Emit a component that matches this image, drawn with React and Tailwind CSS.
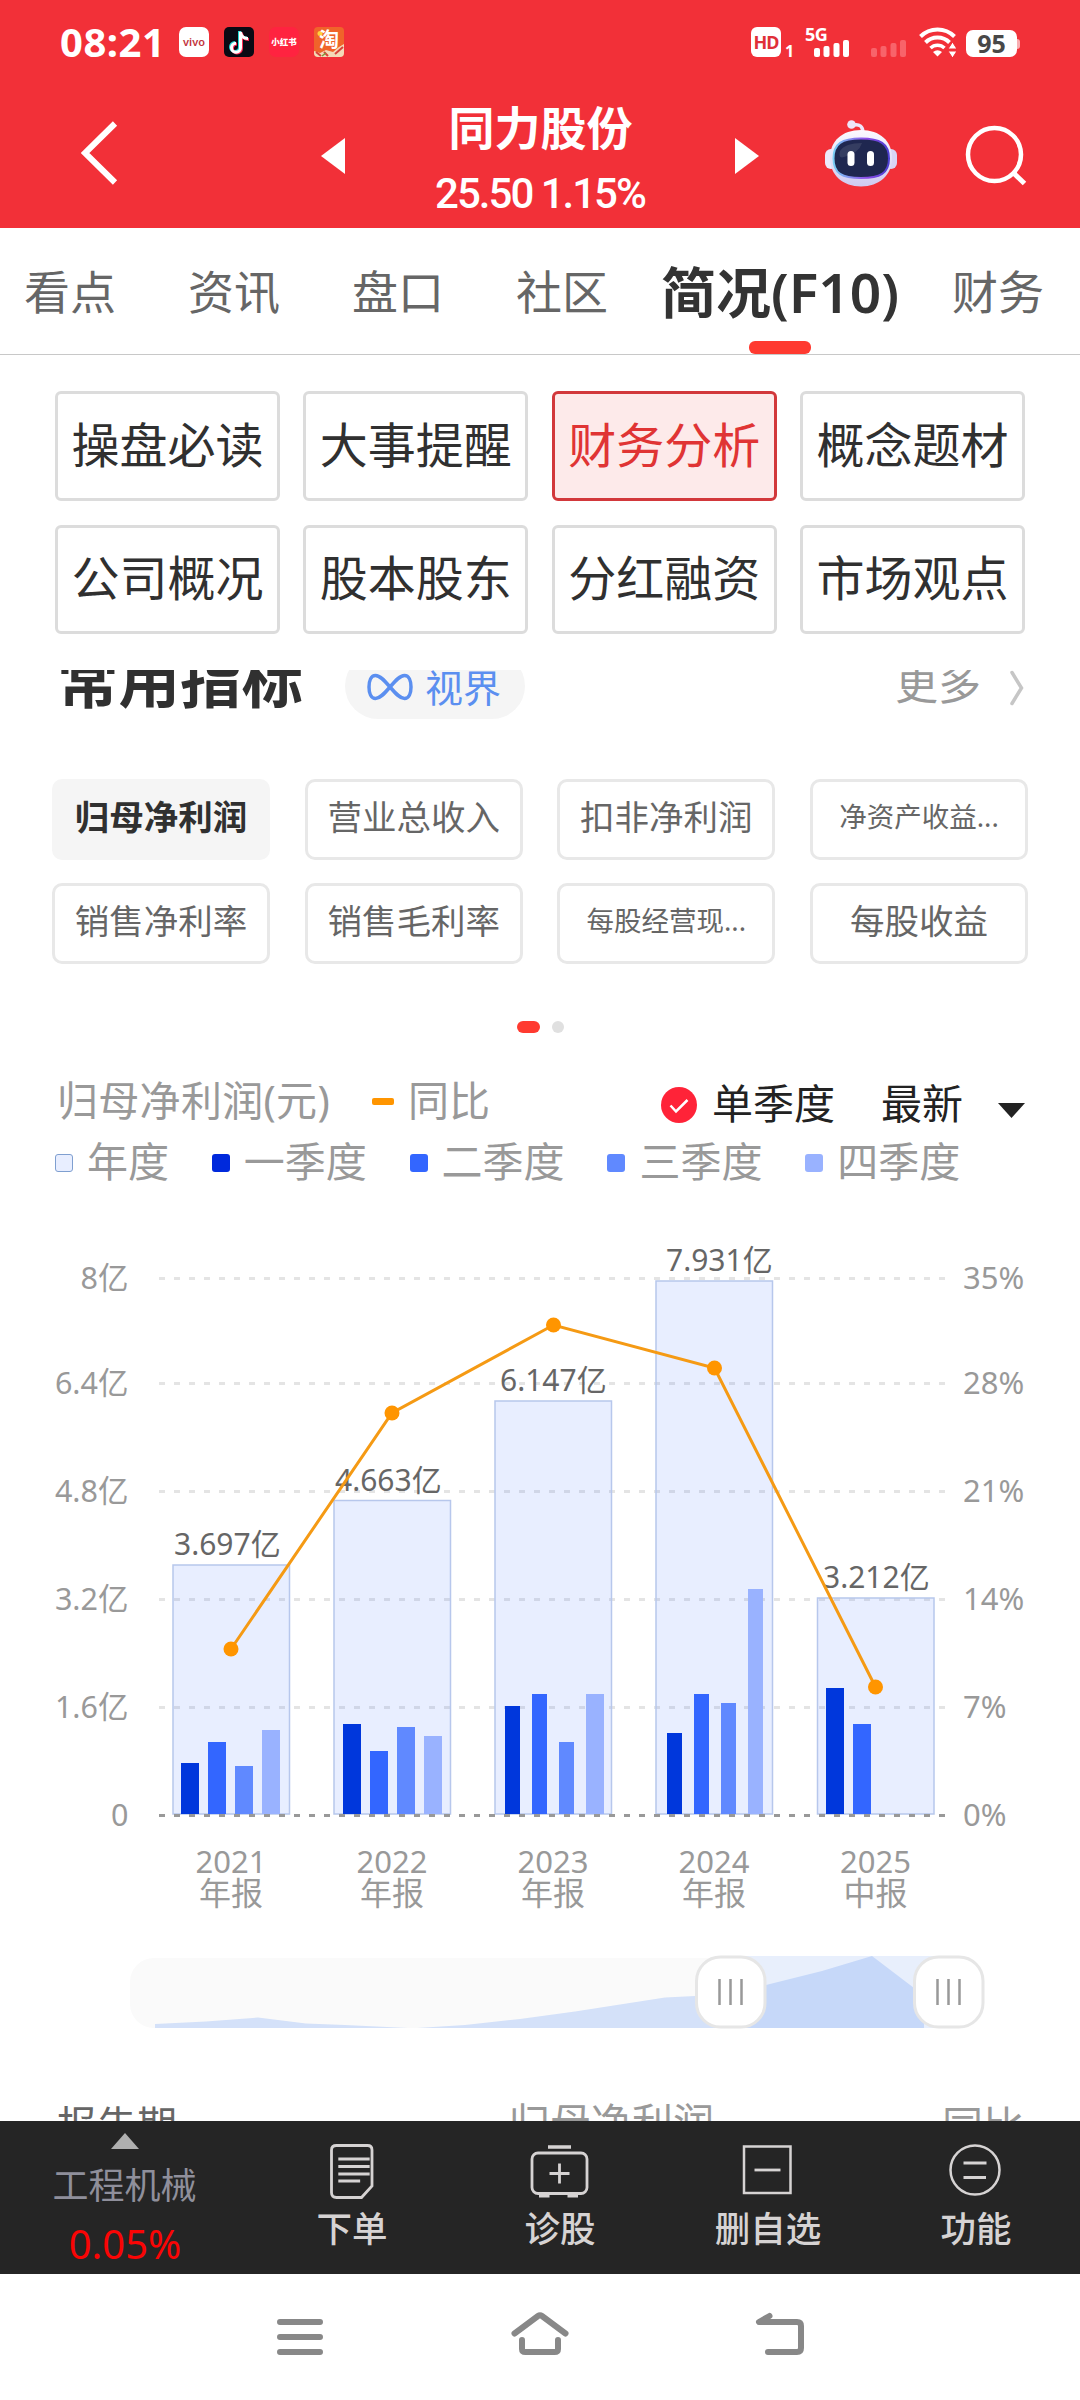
// App.jsx
const TABS = ["看点", "资讯", "盘口", "社区", "简况(F10)", "财务"];

const SECTIONS = [
  "操盘必读", "大事提醒", "财务分析", "概念题材",
  "公司概况", "股本股东", "分红融资", "市场观点",
];

const METRICS = [
  { name: "归母净利润", active: true },
  { name: "营业总收入" },
  { name: "扣非净利润" },
  { name: "净资产收益...", small: true },
  { name: "销售净利率" },
  { name: "销售毛利率" },
  { name: "每股经营现...", small: true },
  { name: "每股收益" },
];

const LEGEND = [
  { name: "年度", swatch: "bg-[#e8eeff] border border-[#7f9fd0]" },
  { name: "一季度", swatch: "bg-[#0029dc]" },
  { name: "二季度", swatch: "bg-[#3366ff]" },
  { name: "三季度", swatch: "bg-[#6089ff]" },
  { name: "四季度", swatch: "bg-[#99b2ff]" },
];

const Q_COLORS = ["#0037dc", "#3366ff", "#6089ff", "#99b2ff"];

// chart pixel space, q = [x, width, top] per quarter
const BASE_Y = 614;
const YEARS = [
  { year: "2021", kind: "年报", label: "3.697亿", lx: 174, x: 173, top: 365, q: [[181, 18, 563], [208, 18, 542], [235, 18, 566], [262, 18, 530]] },
  { year: "2022", kind: "年报", label: "4.663亿", lx: 335, x: 334, top: 300.5, q: [[343, 18, 524], [370, 18, 551], [397, 18, 527], [424, 18, 536]] },
  { year: "2023", kind: "年报", label: "6.147亿", lx: 500, x: 495, top: 201, q: [[505, 15, 506], [532, 15, 494], [559, 15, 542], [586, 18, 494]] },
  { year: "2024", kind: "年报", label: "7.931亿", lx: 666, x: 656, top: 81, q: [[667, 15, 533], [694, 15, 494], [721, 15, 503], [748, 15, 389]] },
  { year: "2025", kind: "中报", label: "3.212亿", lx: 823, x: 817.5, top: 398, q: [[826, 18, 488], [853, 18, 524]] },
];
const GROWTH = [[231, 449], [392, 213], [553.5, 125], [714.5, 168], [875.5, 487]];
const GRID = [
  { y: 78.5, left: "8亿", right: "35%" },
  { y: 183.5, left: "6.4亿", right: "28%" },
  { y: 291.5, left: "4.8亿", right: "21%" },
  { y: 399.5, left: "3.2亿", right: "14%" },
  { y: 507.5, left: "1.6亿", right: "7%" },
  { y: 615.5, left: "0", right: "0%" },
];

function Signal({ className }) {
  return (
    <svg width="35" height="17" viewBox="0 0 35 17" className={className} fill="currentColor">
      <rect x="0" y="8" width="6" height="9" rx="2" />
      <rect x="9.5" y="6" width="6" height="11" rx="2" />
      <rect x="19.5" y="3" width="6" height="14" rx="2" />
      <rect x="29" y="0" width="6" height="17" rx="2" />
    </svg>
  );
}

function StatusBar() {
  return (
    <div className="h-[84px] flex items-center pl-[60px] pr-[60px] text-white">
      <div className="w-[119px] text-[40px] leading-none font-bold tracking-[0.5px]">08:21</div>
      <div className="flex gap-[15px]">
        <div className="w-[30px] h-[30px] rounded-[7px] bg-white flex items-center justify-center">
          <span className="text-[11px] leading-none font-semibold text-[#c2343c] pb-[2px]">vivo</span>
        </div>
        <div className="w-[30px] h-[30px] rounded-[5px] bg-[#0a0a14]">
          <svg width="30" height="30" viewBox="0 0 30 30" fill="none" strokeWidth="3">
            <path d="M15.5 4v16a4.5 4.5 0 1 1-4.5-4.5M15.5 5c.5 3.500 3 6 7.500 6" stroke="#25d8d4" />
            <path d="M17.500 5.500v16a4.500 4.500 0 1 1-4.500-4.500M17.500 6.500c.5 3.500 3 6 7.500 6" stroke="#fe2c55" />
            <path d="M16.500 4.700v16a4.500 4.500 0 1 1-4.500-4.500M16.500 5.500c.5 3.500 3 6 7.500 6" stroke="#fff" />
          </svg>
        </div>
        <div className="w-[30px] h-[30px] rounded-[7px] bg-[#ff2340] flex items-center justify-center">
          <span className="text-[8.5px] leading-none font-black whitespace-nowrap">小红书</span>
        </div>
        <div className="w-[30px] h-[30px] rounded-[4px] bg-[#f0642a] relative flex justify-center">
          <svg width="30" height="30" viewBox="0 0 30 30" className="absolute inset-0 rounded-[4px]">
            <circle cx="6" cy="6.500" r="2.500" fill="#ffd23c" />
            <path d="M0 24l6 2 6-3 7 2 6-5 5-3v13H0z" fill="#f4d9b8" />
            <path d="M2 25l5 4M10 25l4 4M21 27l8-7" stroke="#d8433a" strokeWidth="2" />
            <path d="M8 29l4-3" stroke="#7a9a3a" strokeWidth="1.500" />
          </svg>
          <span className="relative text-[20px] leading-[26px] font-bold">淘</span>
        </div>
      </div>

      <div className="ml-auto flex items-center">
        <div className="w-[30px] h-[30px] rounded-[6px] bg-white text-[#e03038] text-[18px] font-bold leading-none flex items-center justify-center tracking-[-1px]">
          HD
        </div>
        <span className="text-[16px] leading-none font-bold ml-[4px] pt-[18px] w-[20px]">1</span>
        <div className="w-[45px] h-[30px] relative">
          <span className="absolute left-0 top-[-2px] text-[18px] leading-none font-bold tracking-[-0.5px]">5G</span>
          <Signal className="absolute left-[9px] bottom-0" />
        </div>
        <div className="w-[35px] h-[30px] ml-[21px] flex items-end">
          <Signal className="text-[#f8636a]" />
        </div>
        <svg width="37" height="30" viewBox="0 0 37 30" className="ml-[13px]" fill="none" stroke="#fff" strokeWidth="4">
          <path d="M1.500 9.500a24 24 0 0 1 34 0" />
          <path d="M6.500 15.500a17 17 0 0 1 24 0" />
          <path d="M11.500 21a10 10 0 0 1 14 0" strokeWidth="3.500" />
          <path d="M14 25q4.500-3.500 9 0l-4.500 4.500z" fill="#fff" stroke="none" />
          <path d="M33.500 15l4.500 7h-9zM33.500 31l-4.500-7h9z" fill="#fff" stroke="#f23038" strokeWidth="1" />
        </svg>
        <div className="ml-[10px] mt-[3px] w-[51px] h-[27px] rounded-[7px] bg-white text-[#484848] text-[25px] leading-none font-bold flex items-center justify-center">
          95
        </div>
        <div className="w-[3px] h-[10px] mt-[3px] rounded-r bg-[#f9aeb2]" />
      </div>
    </div>
  );
}

function Robot() {
  return (
    <svg width="74" height="70" viewBox="0 0 74 70">
      <defs>
        <linearGradient id="shell" x1="0" y1="0" x2="0" y2="1">
          <stop offset="0" stopColor="#fbfaff" />
          <stop offset="1" stopColor="#cfcaf0" />
        </linearGradient>
        <linearGradient id="rim" x1="0" y1="0" x2="1" y2="0">
          <stop offset="0" stopColor="#79cdf5" />
          <stop offset="0.600" stopColor="#8d4be8" />
          <stop offset="1" stopColor="#4b3fd0" />
        </linearGradient>
      </defs>
      <path d="M29 7q10-2 10 8" fill="none" stroke="#efe6fa" strokeWidth="3.500" />
      <circle cx="27.500" cy="6.500" r="4.300" fill="#eee4f8" />
      <rect x="1" y="31" width="12" height="20" rx="6" fill="#ece9fb" />
      <rect x="61" y="31" width="12" height="20" rx="6" fill="#d9d5f5" />
      <path d="M37 12C56 12 68 23 68 40S55 68.500 37 68.500 6 57 6 40 18 12 37 12z" fill="url(#shell)" />
      <path d="M37 20.500c19 0 28 5 28 20S56 60 37 60 9.500 55.500 9.500 40.500s8.500-20 27.500-20z" fill="#1f2750" stroke="url(#rim)" strokeWidth="2" />
      <path d="M16 33q5-8 22-8-3 10-18 14-6 2-4-6z" fill="#fff" opacity="0.100" />
      <rect x="23.500" y="33" width="7" height="15" rx="3.500" fill="#fff" />
      <rect x="43" y="33" width="7" height="15" rx="3.500" fill="#fff" />
    </svg>
  );
}

function TitleBar() {
  return (
    <div className="h-[144px] flex items-start pl-[81px] text-white">
      <svg width="37" height="64" viewBox="0 0 37 64" className="mt-[37px]" fill="none" stroke="#fff" strokeWidth="6">
        <path d="M34 2.500L4 32l30 29.500" />
      </svg>
      <svg width="24" height="36" viewBox="0 0 24 36" className="ml-[203px] mt-[54px]">
        <path d="M0 18L24 0v36z" fill="#fff" />
      </svg>
      <div className="w-[390px] flex flex-col items-center whitespace-nowrap">
        <div className="mt-[20px] pl-[1px] text-[46px] leading-[46px] font-semibold">同力股份</div>
        <div className="mt-[21px] text-[42px] leading-[46px] font-medium tracking-[-2px] word-spacing-normal font-[Roboto]">25.50 1.15%</div>
      </div>
      <svg width="24" height="36" viewBox="0 0 24 36" className="mt-[54px]">
        <path d="M24 18L0 0v36z" fill="#fff" />
      </svg>
      <div className="ml-[65px] mt-[34px]">
        <Robot />
      </div>
      <svg width="62" height="62" viewBox="0 0 62 62" className="ml-[67px] mt-[41px]" fill="none" stroke="#fff" strokeWidth="4.500">
        <circle cx="29.500" cy="29.500" r="26.500" />
        <path d="M48 47.500L59.500 58.500" strokeWidth="5" />
      </svg>
    </div>
  );
}

function Chart() {
  return (
    <svg width="1080" height="720" viewBox="0 0 1080 720" className="block mt-[12px] shrink-0">
      {GRID.map((g, i) => (
        <g key={g.left} fill="#999">
          <line x1="159" x2="945" y1={g.y} y2={g.y} stroke={i === 5 ? "#999" : "#e4e4e4"} strokeWidth="3" strokeDasharray="6 9" />
          <text x="128.500" y={g.y + 10} textAnchor="end" fontSize="30.500">{g.left}</text>
          <text x="963" y={g.y + 10} fontSize="31">{g.right}</text>
        </g>
      ))}

      {YEARS.map((d) => (
        <g key={d.year}>
          <rect x={d.x} y={d.top} width="116.500" height={BASE_Y - d.top} fill="#3366ff" fillOpacity="0.115" stroke="#b7c7ec" strokeWidth="1.500" />
          {d.q.map(([x, w, top], i) => (
            <rect key={x} x={x} y={top} width={w} height={BASE_Y - top} fill={Q_COLORS[i]} />
          ))}
          <text x={d.lx} y={d.top - 10} fill="#666" fontSize="30">{d.label}</text>
          <text x={d.x + 58} y="672.500" fill="#999" fontSize="31" textAnchor="middle">{d.year}</text>
          <text x={d.x + 58} y="705" fill="#999" fontSize="32" textAnchor="middle">{d.kind}</text>
        </g>
      ))}
      {/* zero line stays visible over the bars */}
      <line x1="159" x2="945" y1="615.500" y2="615.500" stroke="#999" strokeWidth="3" strokeDasharray="6 9" />

      <polyline points={GROWTH.map((p) => p.join(",")).join(" ")} fill="none" stroke="#f59a14" strokeWidth="3" />
      {GROWTH.map(([x, y]) => (
        <circle key={x} cx={x} cy={y} r="7.500" fill="#ff9500" />
      ))}
    </svg>
  );
}

function RangeSlider() {
  return (
    <svg width="1080" height="76" viewBox="0 0 1080 76" className="block mt-[34px] shrink-0">
      <rect x="130" y="4" width="600" height="70" rx="24" fill="#fafafa" />
      <rect x="300" y="4" width="440" height="70" fill="#fafafa" />
      <path d="M155 74v-4l51-2.500 52-4 48 6 39 1.500 63 3h9l48-3 55-6 55-7.500 45-7 45-7 30-1.500h40V74z" fill="#d4e1f9" />
      <rect x="731" y="2" width="218" height="72" fill="#e8effc" />
      <path d="M731 74V38l35-7 56-14 50-15 42 32 10 10v30z" fill="#c6d8f9" />
      {[696.5, 914.5].map((x) => (
        <g key={x}>
          <rect x={x} y="3" width="68.500" height="70" rx="24" fill="#fff" stroke="#e6e6e6" strokeWidth="3" />
          <path d={`M${x + 23} 25v26M${x + 34} 25v26M${x + 45} 25v26`} stroke="#999" strokeWidth="2.500" />
        </g>
      ))}
    </svg>
  );
}

function ActionIcon({ type }) {
  return (
    <svg width="60" height="60" viewBox="0 0 60 60" fill="none" stroke="#d6d3d3" strokeWidth="2.800">
      {type === "order" && (
        <g transform="translate(2.500 0)">
          <path d="M12 3.500h31q4.500 0 4.500 4.500V44L37 55.500H12q-5 0-5-5V8q0-4.500 5-4.500z" />
          <path d="M14 17h33M14 24.500h33M14 32h33M14 39h23" transform="translate(0.500 0) scale(0.950 1)" />
        </g>
      )}
      {type === "diagnose" && (
        <g transform="translate(-1 0)">
          <path d="M19 5h23" strokeWidth="3.500" />
          <rect x="3" y="11" width="55" height="40.500" rx="6" />
          <path d="M20.500 31.500h20M30.500 21.500v20M10 54h10.500M38.500 54H49" />
        </g>
      )}
      {type === "remove" && (
        <>
          <rect x="6" y="4.500" width="46.500" height="46.500" strokeWidth="2.500" />
          <path d="M16.500 28h26" />
        </>
      )}
      {type === "more" && (
        <>
          <circle cx="29" cy="28" r="24.500" strokeWidth="2.500" />
          <path d="M17.500 21h23M17.500 35.500h22.500" />
        </>
      )}
    </svg>
  );
}

const ACTIONS = [
  { type: "order", name: "下单" },
  { type: "diagnose", name: "诊股" },
  { type: "remove", name: "删自选" },
  { type: "more", name: "功能" },
];

function ActionBar() {
  return (
    <div className="h-[153px] shrink-0 bg-[#252525] flex">
      <div className="w-[248px] flex flex-col items-center leading-none whitespace-nowrap">
        <svg width="28" height="16" viewBox="0 0 28 16" className="mt-[12px] ml-[1px]">
          <path d="M14 0l14 16H0z" fill="#b0b0b0" />
        </svg>
        <span className="mt-[19px] ml-[1px] text-[36px] text-[#8f8f9b]">工程机械</span>
        <span className="mt-[20px] ml-[2px] text-[40px] text-[#fa0505]">0.05%</span>
      </div>
      <div className="flex-1 grid grid-cols-4">
        {ACTIONS.map((a) => (
          <div key={a.type} className="flex flex-col items-center pt-[21px] text-[#d6d3d3]">
            <ActionIcon type={a.type} />
            <span className="mt-[9px] text-[35.5px] leading-none font-medium whitespace-nowrap">{a.name}</span>
          </div>
        ))}
      </div>
    </div>
  );
}

function SystemNav() {
  return (
    <div className="h-[126px] shrink-0 flex items-start pl-[277px] pt-[36px]">
      <svg width="46" height="48" viewBox="0 0 46 48" fill="none" stroke="#888" strokeWidth="6" strokeLinecap="round">
        <path d="M3 12h40M3 27h40M3 42h40" />
      </svg>
      <svg width="58" height="48" viewBox="0 0 58 48" className="ml-[188px]" fill="none" stroke="#888" strokeWidth="6" strokeLinecap="round">
        <path d="M3.500 23.500L27 6q2-1.500 4 0l23.500 17.500" />
        <path d="M11 30v9q0 3 3.500 3h29q3.500 0 3.500-3v-9" />
      </svg>
      <svg width="50" height="48" viewBox="0 0 50 48" className="ml-[186px]" fill="none" stroke="#888" strokeWidth="6" strokeLinecap="round" strokeLinejoin="round">
        <path d="M14.500 6L4 12h38q4 0 4 4v22q0 4-4 4H13" />
      </svg>
    </div>
  );
}

export default function App() {
  return (
    <div className="w-[1080px] h-[2400px] overflow-hidden bg-white flex flex-col font-['Noto_Sans','Noto_Sans_CJK_SC',sans-serif]">
      <header className="bg-[#f23038] h-[228px] shrink-0">
        <StatusBar />
        <TitleBar />
      </header>

      {/* Tabs */}
      <nav className="h-[127px] shrink-0 border-b border-[#c8c8c8] flex gap-[72px] pl-[24px] text-[46px] text-[#666] whitespace-nowrap">
        {TABS.map((t) =>
          t === "简况(F10)" ? (
            <div key={t} className="relative w-[240px] mx-[-20px] pt-[2px] flex items-center justify-center text-[55px] font-semibold text-[#333]">
              {t}
              <span className="absolute bottom-0 left-[89px] w-[62px] h-[13px] rounded-[6px] bg-[#ff3a30]" />
            </div>
          ) : (
            <div key={t} className="flex items-center w-[92px]">{t}</div>
          )
        )}
      </nav>

      {/* Section buttons */}
      <div className="mt-[36px] px-[55px] grid grid-cols-4 gap-x-[23.5px] gap-y-[24px] shrink-0">
        {SECTIONS.map((s) => (
          <button
            key={s}
            className={
              s === "财务分析"
                ? "h-[109.5px] border-[3px] border-[#d2383b] rounded-[6px] bg-[#fdeaea] text-[#e03434] text-[48px] leading-none pb-[2px] whitespace-nowrap"
                : "h-[109.5px] border-[3px] border-[#dcdcdc] rounded-[6px] text-[#303030] text-[48px] leading-none pb-[2px] whitespace-nowrap"
            }
          >
            {s}
          </button>
        ))}
      </div>

      {/* Scrolled content, its first and last rows are cut by the fixed bars */}
      <main className="mt-[36px] h-[1451px] shrink-0 overflow-hidden flex flex-col">
        <div className="h-[66px] mt-[-17px] shrink-0 flex items-center pl-[57px] pr-[56px]">
          <h2 className="pb-[12px] text-[61.5px] leading-none font-bold text-[#303030] whitespace-nowrap">常用指标</h2>
          <div className="ml-[42px] w-[180px] h-[66px] rounded-full bg-[#f5f5f5] flex items-center pl-[22px] text-[#5b8ff0] text-[38px] leading-none whitespace-nowrap">
            <svg width="46" height="28" viewBox="0 0 46 28" fill="none" stroke="#5b8ff0" strokeWidth="3.500" className="mr-[12px] mt-[2px]">
              <path d="M23 14C17 7 13 2.500 8.500 2.500 4 2.500 2 8 2 14s2 11.500 6.500 11.500C13 25.500 17 21 23 14S33 2.500 37.500 2.500C42 2.500 44 8 44 14s-2 11.500-6.500 11.500C33 25.500 29 21 23 14z" />
            </svg>
            <span className="pt-[2px]">视界</span>
          </div>
          <div className="ml-auto flex items-center text-[43px] leading-none text-[#999]">
            <span className="pb-[5px]">更多</span>
            <svg width="15" height="36" viewBox="0 0 15 36" fill="none" stroke="#c6c6c6" strokeWidth="3.500" strokeLinecap="round" className="ml-[28px] mt-[4px]">
              <path d="M3 2.500L12.500 18 3 33.500" />
            </svg>
          </div>
        </div>

        {/* Metric chips */}
        <div className="mt-[60px] px-[52px] grid grid-cols-4 gap-x-[34.6px] gap-y-[23px] shrink-0">
          {METRICS.map((m) => (
            <button
              key={m.name}
              className={
                m.active
                  ? "h-[81px] rounded-[10px] bg-[#f5f5f5] text-[#303030] text-[34.5px] leading-none pb-[5px] font-bold whitespace-nowrap"
                  : m.small
                    ? "h-[81px] rounded-[10px] border-[3px] border-[#e8e8e8] text-[#666] text-[27.5px] leading-none pb-[5px] whitespace-nowrap"
                    : "h-[81px] rounded-[10px] border-[3px] border-[#e8e8e8] text-[#666] text-[34.5px] leading-none pb-[5px] whitespace-nowrap"
              }
            >
              {m.name}
            </button>
          ))}
        </div>

        {/* Pager */}
        <div className="mt-[57px] flex justify-center gap-[12px] shrink-0">
          <span className="w-[23px] h-[12px] rounded-full bg-[#ff3a30]" />
          <span className="w-[12px] h-[12px] rounded-full bg-[#e0e0e0]" />
        </div>

        {/* Legend */}
        <div className="mt-[44px] h-[52px] shrink-0 flex items-center pl-[57px] text-[41px] leading-none text-[#999] whitespace-nowrap">
          <span className="w-[315px] pb-[6px] tracking-[0.3px]">归母净利润(元)</span>
          <span className="w-[22px] h-[7px] mb-[4px] rounded-[2px] bg-[#ff9500]" />
          <span className="ml-[14px] w-[253px] pb-[6px]">同比</span>
          <svg width="36" height="36" viewBox="0 0 36 36" className="mt-[3px]">
            <circle cx="18" cy="18" r="18" fill="#ff2338" />
            <path d="M9.500 18.500l5.500 6L26.500 13" fill="none" stroke="#fff" strokeWidth="2.500" />
          </svg>
          <span className="ml-[15px] pt-[1px] text-[#222]">单季度</span>
          <span className="ml-[46px] pt-[1px] text-[#222]">最新</span>
          <svg width="27" height="15" viewBox="0 0 27 15" className="ml-[35px] mt-[14px]">
            <path d="M0 0h27L13.500 15z" fill="#222" />
          </svg>
        </div>
        <div className="mt-[7px] h-[52px] shrink-0 flex items-center gap-[42.8px] pl-[55px] text-[41px] leading-none text-[#999] whitespace-nowrap">
          {LEGEND.map((l) => (
            <div key={l.name} className="flex items-center pb-[2px]">
              <span className={`w-[18px] h-[18px] mr-[14px] mt-[4px] rounded-[3px] ${l.swatch}`} />
              {l.name}
            </div>
          ))}
        </div>

        <Chart />
        <RangeSlider />

        {/* Report table head */}
        <div className="mt-[72px] h-[50px] shrink-0 flex items-start pl-[57px] pr-[56px] text-[41px] leading-none text-[#999] whitespace-nowrap">
          <span className="w-[452px] pt-[3px] text-[40px] text-[#666]">报告期</span>
          <span>归母净利润</span>
          <span className="ml-auto pt-[3px]">同比</span>
        </div>
      </main>

      <ActionBar />
      <SystemNav />
    </div>
  );
}
